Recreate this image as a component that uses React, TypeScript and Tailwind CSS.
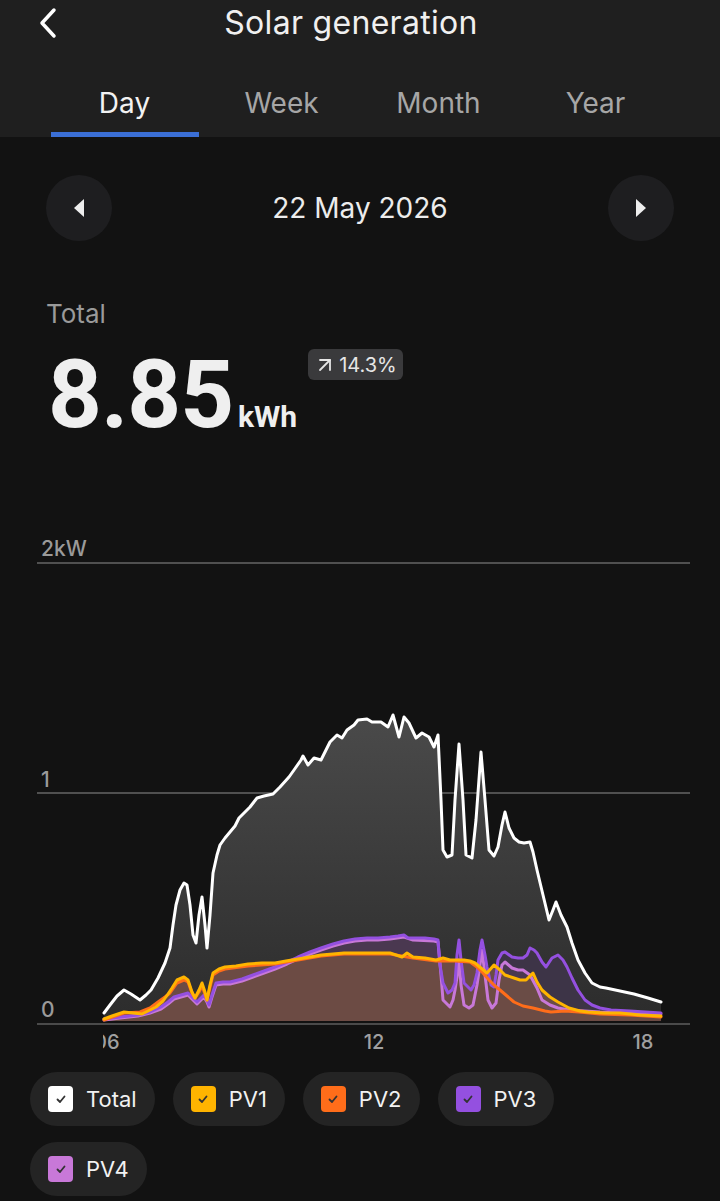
import { ArrowUpRight } from "lucide-react";

const total =
  "104,1013 110,1005 117,996 124,990 131,994 140,1000 146,995 151,990 158,978 165,963 170,948 173,925 176,905 180,890 184,883 187,885 190,905 193,935 196,943 199,915 202,897 205,925 207,948 210,915 213,873 217,855 220,845 225,838 230,832 235,826 239,818 245,812 250,807 257,798 264,796 273,794 280,787 289,777 294,770 301,760 303,756 308,765 314,758 321,760 330,742 337,735 342,738 347,730 354,725 358,720 367,719 372,722 381,722 388,727 393,715 399,737 404,717 409,723 416,738 422,733 429,737 434,747 438,735 441,800 443,850 447,857 452,855 455,800 459,744 463,800 466,855 472,858 476,820 481,752 485,800 489,850 494,856 498,847 502,825 505,812 509,828 514,838 519,842 524,843 530,842 533,852 537,870 543,895 549,920 553,910 556,902 561,915 567,927 572,943 578,960 585,973 592,983 600,987 606,988 620,991 634,994 648,998 661,1002";

const pv1 =
  "104,1019 112,1016 124,1012 133,1013 142,1014 150,1010 156,1007 163,1001 168,994 172,988 177,980 184,977 188,980 192,992 195,998 199,990 202,983 205,992 207,1000 210,985 213,973 219,969 225,967 236,966 248,964 262,963 275,963 286,961 298,959 310,957 321,955 333,954 344,953 355,953 367,953 378,953 390,953 396,955 402,957 407,953 413,957 425,958 436,960 443,958 450,960 455,960 464,960 470,961 475,963 481,968 487,973 494,965 500,970 505,975 514,978 520,980 526,980 533,973 537,982 542,990 550,997 558,1002 569,1008 580,1011 588,1012 604,1013 620,1013 640,1015 661,1016";

const pv2 =
  "104,1020 124,1013 140,1012 150,1008 158,1002 165,997 170,993 177,983 184,980 188,982 192,993 195,998 199,992 202,986 205,994 207,1000 210,987 213,975 219,971 225,969 248,966 275,964 298,960 321,956 344,954 367,954 390,954 413,958 436,961 455,961 470,962 477,967 483,973 489,980 495,986 500,990 507,996 514,1002 523,1006 533,1008 545,1011 551,1012 565,1011 579,1012 600,1014 630,1015 661,1017";

const pv3 =
  "104,1019 120,1017 138,1015 150,1012 161,1007 168,1002 174,997 181,995 188,993 193,998 197,1002 201,998 204,995 207,1000 209,1005 212,995 216,983 223,982 230,982 242,979 253,975 264,971 275,967 287,962 298,957 310,952 321,948 333,944 344,941 355,939 367,938 378,938 390,937 398,936 404,935 408,938 413,938 425,938 434,939 438,940 440,965 443,983 448,993 452,990 455,983 457,955 459,940 461,960 464,983 471,990 474,985 477,973 480,950 482,940 485,955 487,967 491,985 494,987 496,975 498,960 502,953 505,952 512,957 518,958 523,958 527,955 530,948 534,950 537,953 542,962 546,967 552,958 558,955 563,960 567,967 572,978 578,990 585,1000 592,1005 600,1008 611,1010 630,1011 661,1013";

const pv4 =
  "104,1020 120,1018 138,1016 150,1013 161,1009 168,1004 174,999 181,997 188,995 193,1000 197,1004 201,1000 204,997 207,1002 209,1007 212,997 216,985 223,984 230,984 242,981 253,977 264,973 275,969 287,964 298,959 310,954 321,950 333,946 344,943 355,941 367,940 378,940 390,939 404,937 413,940 434,941 438,942 441,975 443,1000 450,1007 453,1000 455,990 457,977 459,960 461,985 464,1005 469,1008 473,1005 477,985 480,965 482,950 485,975 488,1000 492,1008 496,1003 499,980 502,965 505,962 512,968 518,970 523,970 530,975 537,988 542,1000 550,1005 558,1008 569,1010 600,1012 661,1014";

const area = (pts: string) => `${pts} 661,1021 104,1021`;

const tabs = ["Day", "Week", "Month", "Year"];

const legend = [
  { label: "Total", box: "bg-white" },
  { label: "PV1", box: "bg-[#ffb400]" },
  { label: "PV2", box: "bg-[#ff6d1a]" },
  { label: "PV3", box: "bg-[#9450e0]" },
  { label: "PV4", box: "bg-[#c878d8]" },
];

function Chart() {
  return (
    <div className="relative h-[520px] w-full">
      <svg className="absolute inset-0" width="720" height="520" viewBox="0 540 720 520">
        <defs>
          <linearGradient id="totalFill" x1="0" y1="0" x2="0" y2="1">
            <stop offset="0%" stopColor="#4a4a4a" />
            <stop offset="100%" stopColor="#2c2c2c" />
          </linearGradient>
        </defs>
        <line x1="37" y1="563" x2="690" y2="563" stroke="#505050" strokeWidth="2" />
        <line x1="37" y1="793" x2="690" y2="793" stroke="#505050" strokeWidth="2" />
        <polygon points={area(total)} fill="url(#totalFill)" />
        <polygon points={area(pv3)} fill="#3d3447" />
        <polygon points={area(pv4)} fill="#4a3850" />
        <polygon points={area(pv1)} fill="#6a4c46" />
        <polygon points={area(pv2)} fill="#6c4b44" />
        <line x1="37" y1="1024" x2="690" y2="1024" stroke="#4a4a4a" strokeWidth="2" />
        <g fill="none" strokeWidth="3" strokeLinejoin="round" strokeLinecap="round">
          <polyline points={total} stroke="#ffffff" />
          <polyline points={pv4} stroke="#c878d8" />
          <polyline points={pv3} stroke="#9450e0" />
          <polyline points={pv2} stroke="#ff6d1a" />
          <polyline points={pv1} stroke="#ffb400" />
        </g>
      </svg>
      <span className="absolute left-[41px] top-[-3px] text-[21px] font-medium leading-[24px] text-[#9a9a9a]">2kW</span>
      <span className="absolute left-[41px] top-[228px] text-[21px] font-medium leading-[24px] text-[#9a9a9a]">1</span>
      <span className="absolute left-[41px] top-[458px] text-[21px] font-medium leading-[24px] text-[#9a9a9a]">0</span>
      <div className="absolute left-[103px] top-[490px] w-[20px] overflow-hidden">
        <span className="block -ml-[9px] text-[20px] font-medium leading-[24px] text-[#a0a0a0]">06</span>
      </div>
      <span className="absolute left-[360px] top-[490px] w-[28px] text-center text-[20px] font-medium leading-[24px] text-[#a0a0a0]">12</span>
      <span className="absolute left-[629px] top-[490px] w-[28px] text-center text-[20px] font-medium leading-[24px] text-[#a0a0a0]">18</span>
    </div>
  );
}

export default function App() {
  return (
    <div className="w-[720px] h-[1201px] overflow-hidden bg-[#121212] text-white" style={{ fontFamily: "Inter, 'Noto Sans', sans-serif" }}>
      <header className="bg-[#1f1f1f]">
        <div className="relative flex h-[46px] items-center justify-center pr-[18px]">
          <svg className="absolute left-[38px] top-[7px]" width="20" height="32" viewBox="0 0 20 32">
            <polyline points="16,3 4,16 16,29" fill="none" stroke="#fff" strokeWidth="3.5" strokeLinecap="round" strokeLinejoin="round" />
          </svg>
          <h1 className="text-[32px] leading-[40px] tracking-[0.3px] text-[#f0f0f0]">Solar generation</h1>
        </div>
        <nav className="flex h-[91px] px-[46px]">
          {tabs.map((t, i) => (
            <div key={t} className="flex flex-1 flex-col items-center justify-end">
              <span className={`mb-[13px] text-[28px] leading-[32px] ${i === 0 ? "text-[#f2f2f2]" : "text-[#a6a6a6]"}`}>{t}</span>
              <span className={`h-[5px] w-[148px] ${i === 0 ? "bg-[#3b6fd6]" : "bg-transparent"}`} />
            </div>
          ))}
        </nav>
      </header>

      <div className="mt-[38px] flex items-center justify-between px-[46px]">
        <button className="flex h-[66px] w-[66px] items-center justify-center rounded-full bg-[#1e1e20]">
          <svg width="14" height="20" viewBox="0 0 14 20">
            <polygon points="12,1 2,10 12,19" fill="#eee" />
          </svg>
        </button>
        <span className="text-[28px] leading-[34px] text-[#ececec]">22 May 2026</span>
        <button className="flex h-[66px] w-[66px] items-center justify-center rounded-full bg-[#1e1e20]">
          <svg width="14" height="20" viewBox="0 0 14 20">
            <polygon points="2,1 12,10 2,19" fill="#eee" />
          </svg>
        </button>
      </div>

      <div className="mt-[57px] px-[46px]">
        <p className="text-[26px] leading-[32px] text-[#9a9a9a]">Total</p>
        <div className="mt-[18px] flex items-start">
          <div className="flex items-baseline" style={{ fontFamily: "Roboto, sans-serif" }}>
            <span className="pl-[2px] text-[94px] font-bold leading-[94px] tracking-[-1px] text-[#efefef]">8.85</span>
            <span className="ml-[5px] text-[30px] font-bold text-[#efefef]">kWh</span>
          </div>
          <div className="ml-[11px] mt-[1px] flex h-[31px] items-center gap-[2px] rounded-[6px] bg-[#3a3a3c] pl-[5px] pr-[6px] text-[20px] text-[#e6e6e6]">
            <ArrowUpRight size={24} strokeWidth={1.8} />
            <span>14.3%</span>
          </div>
        </div>
      </div>

      <div className="mt-[98px]">
        <Chart />
      </div>

      <div className="mt-[12px] flex w-[600px] flex-wrap gap-x-[18px] gap-y-[16px] pl-[30px]">
        {legend.map((l) => (
          <div key={l.label} className="flex h-[54px] items-center gap-[13px] rounded-full bg-[#242424] pl-[18px] pr-[18px]">
            <span className={`flex h-[26px] w-[25px] items-center justify-center rounded-[4px] ${l.box}`}>
              <svg width="12" height="12" viewBox="0 0 12 12">
                <polyline points="2.5,6.5 5,9 9.5,3.5" fill="none" stroke="#333" strokeWidth="1.8" strokeLinecap="round" strokeLinejoin="round" />
              </svg>
            </span>
            <span className="text-[22px] leading-[28px] text-[#f2f2f2]">{l.label}</span>
          </div>
        ))}
      </div>
    </div>
  );
}
